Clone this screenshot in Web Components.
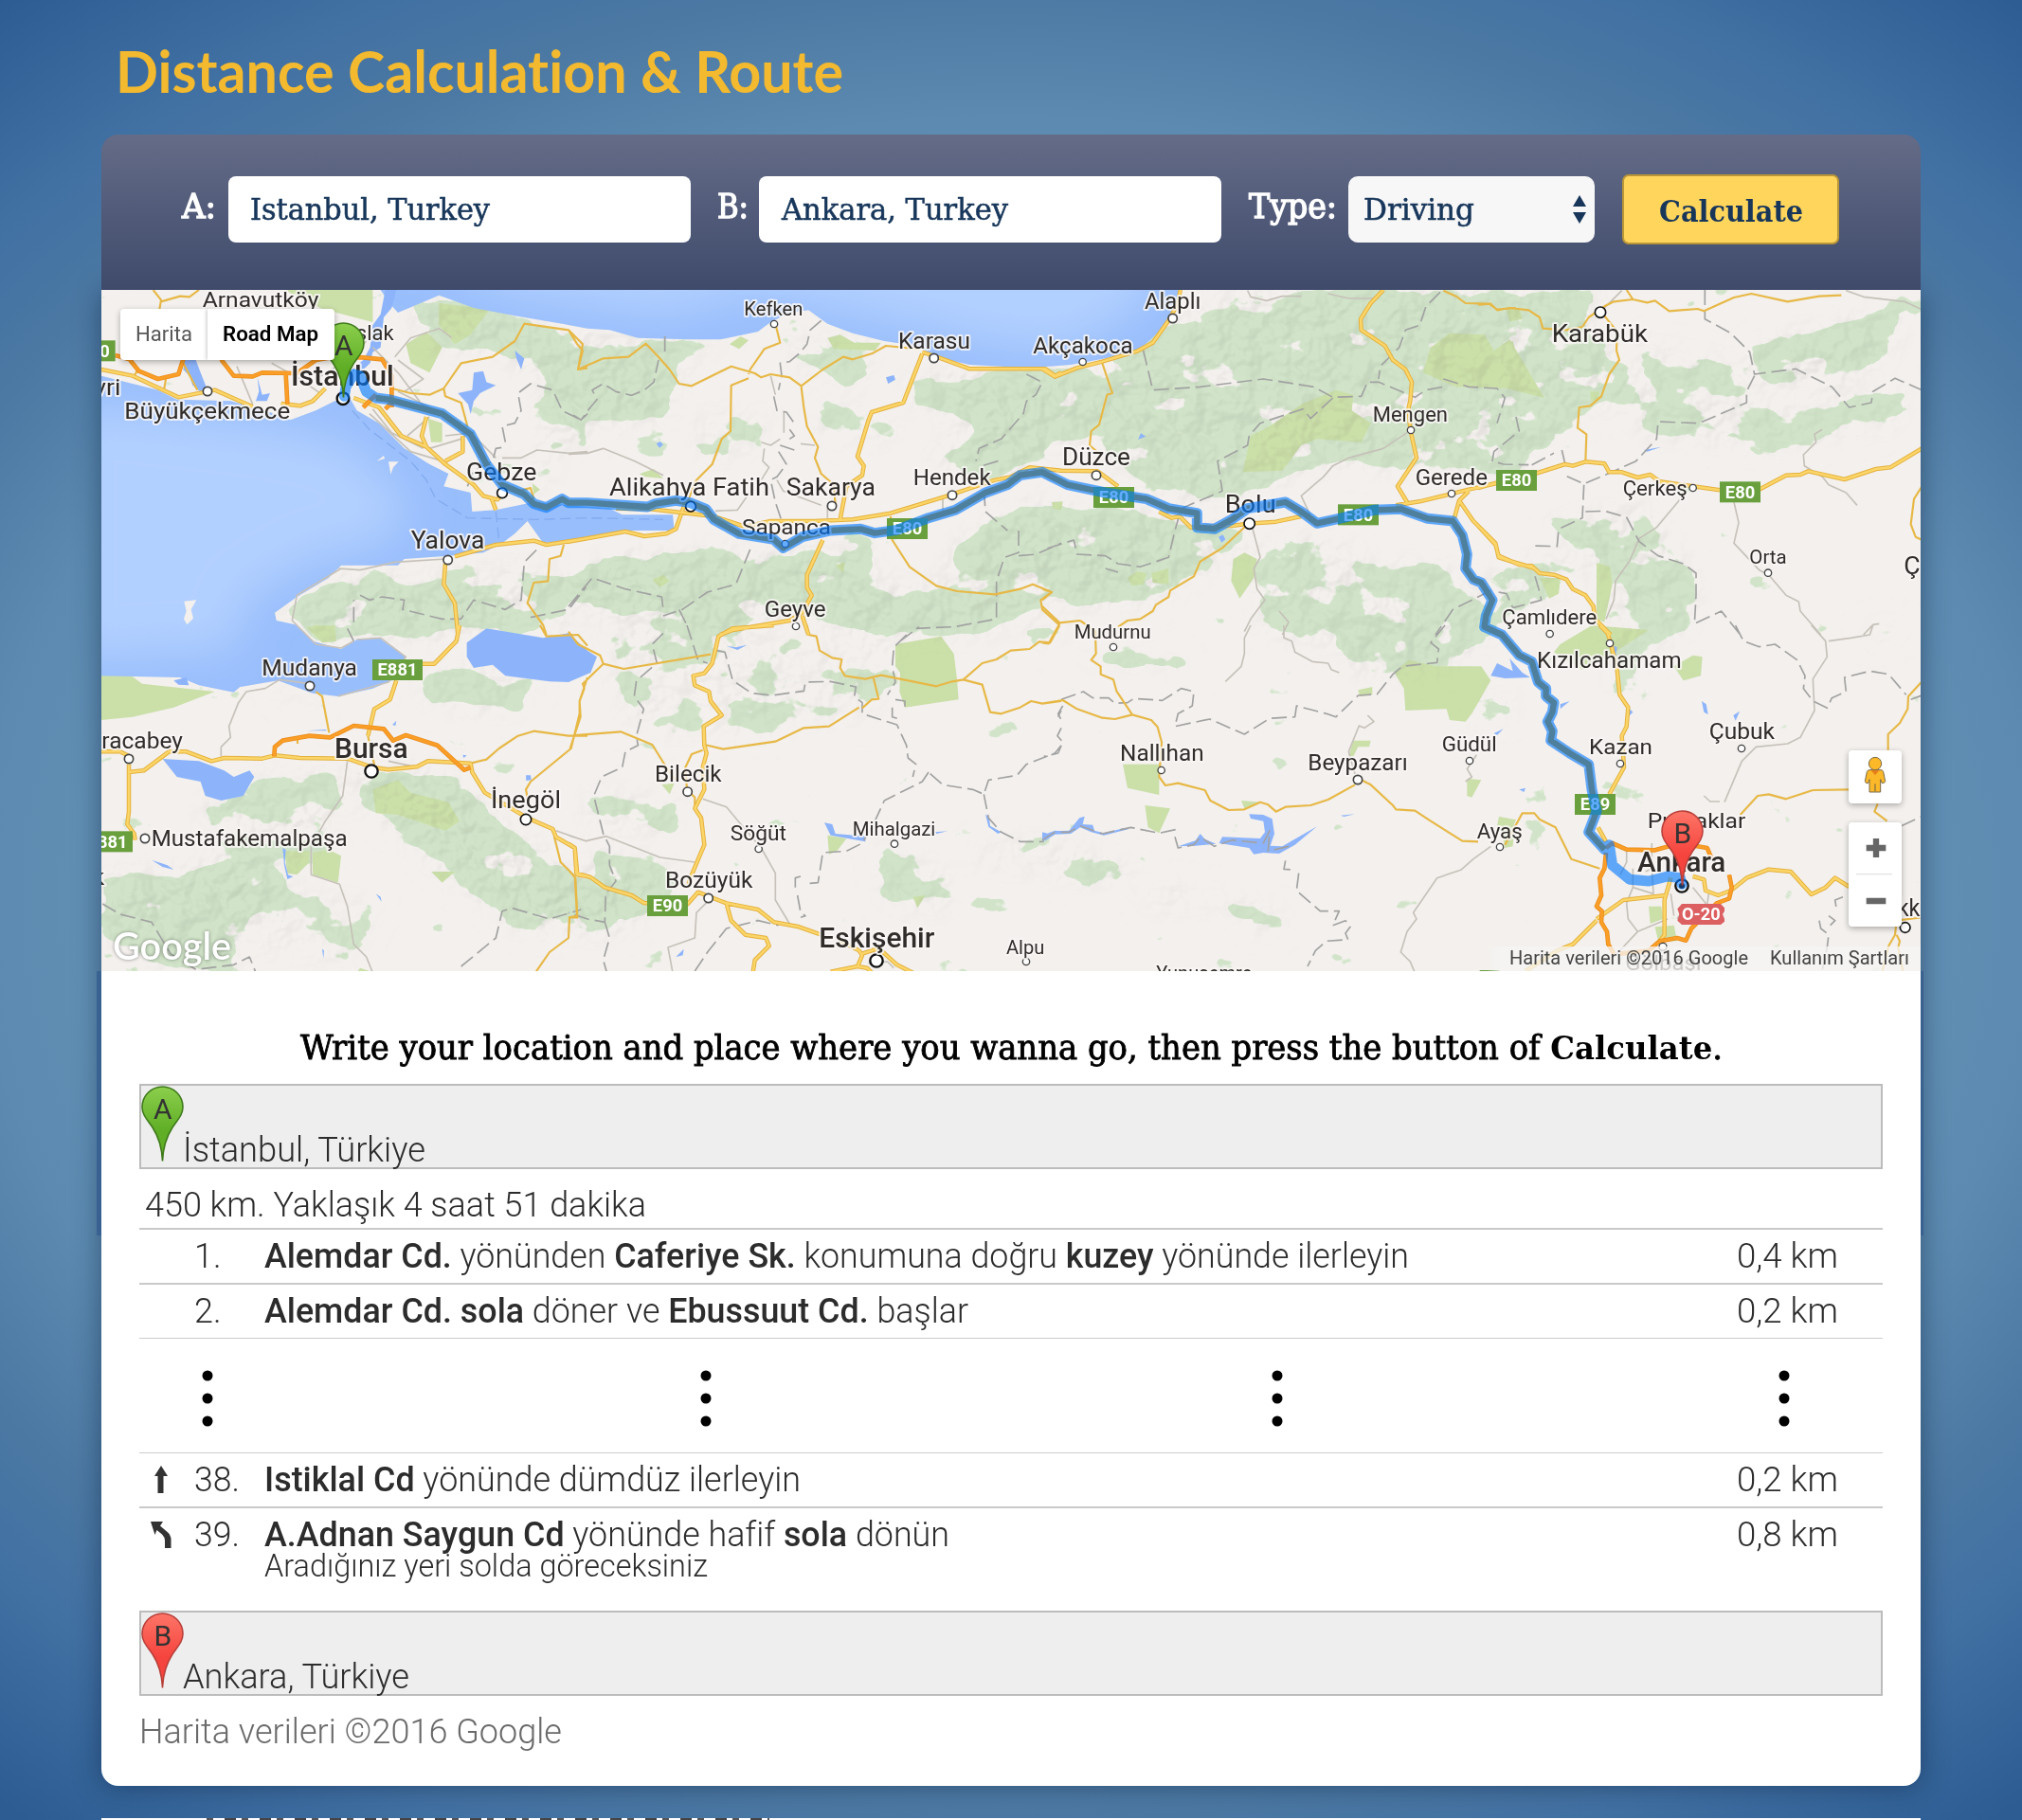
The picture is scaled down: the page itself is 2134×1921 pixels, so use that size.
<!DOCTYPE html>
<html lang="tr">
<head>
<meta charset="utf-8">
<title>Distance Calculation &amp; Route</title>
<style>
html,body{margin:0;height:1921px;overflow:hidden}
body{font-family:Roboto,"Liberation Sans",sans-serif;background:radial-gradient(ellipse 1650px 1250px at 1067px 950px,#628fb3 0,#608eb3 60%,#5c8ab0 66%,#4c79a3 77%,#4170a3 86%,#2c5c92 100%)}
</style>
</head>
<body>
<distance-app></distance-app>
<script>
const def=(name,html,after)=>customElements.define(name,class extends HTMLElement{
  connectedCallback(){
    if(this.shadowRoot)return;
    const t=document.createElement('template');
    t.innerHTML=typeof html==='function'?html(this):html;
    this.attachShadow({mode:'open'}).append(t.content.cloneNode(true));
    if(after)after(this);
  }
});

/* ---------- map data: [dx, dy] origin per tile, three units per pixel ---------- */
const tiles={
A:[0,0],B:[1500,0],C:[3000,0],D:[4380,0],E:[0,1080],F:[1500,1080],G:[3000,1080],H:[4380,1080]};
const roads={
A:{
o:'65,225 110,238 140,275 200,300 265,285 280,238;400,238 440,290 500,292 530,280 640,282 700,240 760,230 850,232 910,238 940,290 940,390;605,285 610,380;850,390 890,350;920,395 945,370',
y:'20,270 120,290 265,358 380,335 500,388;590,378 650,385 690,370 730,330;820,360 900,390 970,480 1050,515 1110,570 1200,635 1230,670 1275,682 1290,665;1255,675 1270,715;1050,420 1035,480 1050,515;1165,480 1165,530 1110,560;1140,862 1270,825 1390,812 1430,825 1560,805;1110,885 1105,950 1140,1010 1150,1110',
m:'185,18 210,50 205,80;210,55 270,38 300,40 330,18;940,330 1000,345 1060,350 1105,330 1160,250 1260,230 1330,180 1360,125 1500,145 1545,190 1530,270 1560,265;1105,330 1110,355 1160,375 1180,450;1485,825 1475,860 1440,870 1435,940 1390,945 1370,1010 1420,1080 1430,1110;280,250 325,335;1340,655 1380,645 1390,680;125,290 140,265;220,330 225,300',
g:'770,900 840,905 950,880 1110,870;780,900 640,985 625,1065 640,1080;950,230 1000,170 1090,140 1130,170;1290,550 1350,550 1400,525 1500,535 1560,530;450,260 500,380;880,200 960,280 1050,400;870,410 1000,530 1100,560;880,395 940,470 1040,520;1090,400 1200,480 1270,550;960,340 1160,440;700,300 800,240 860,180;720,350 650,300 560,250;1110,480 1200,470;1060,520 1160,490;980,340 1040,300 960,240;990,480 1060,420',
d:'1300,500 1290,450 1330,440 1350,400 1340,345 1380,315 1450,335 1480,400 1540,430 1560,410;1180,640 1200,590 1260,560 1270,520 1300,515;840,985 870,1000 910,990 980,1000 975,1030 1100,1060 1160,1060 1200,1000 1300,1030 1350,1000 1360,880 1410,830;820,1070 820,1000;1380,1055 1500,1030 1555,960'},
B:{
y:'0,815 180,783 240,798 310,790 340,775 370,690;150,710 260,712 460,735 560,768 640,750 780,750 900,745 1020,725 1200,670 1350,620 1400,610 1460,580 1560,590;860,745 880,640 930,605 935,575 915,545 950,430 960,405 1060,375 1120,220;1120,215 1180,235 1270,268 1510,268 1540,290 1560,280;805,810 755,920 755,960 770,985 740,1040 700,1065 520,1095 480,1110;740,1050 760,1110',
m:'0,145 28,190 45,210 30,270 110,235 190,230 245,188 285,230 320,270 350,315 390,322 515,260 590,282 610,295 640,285 700,295 737,322 805,270 870,230 900,238 960,220 1005,195 1110,205;570,285 575,270 620,205 670,185 655,125;570,298 515,320 513,465 485,490 455,570 405,620 380,680;737,325 745,390 755,450 790,515 780,550 800,600 840,635 845,700;1020,735 1025,810 1080,895 1165,955 1230,972 1350,982 1430,965 1470,950 1530,975 1495,1000 1500,1030 1555,1080',
g:'0,538 60,535 110,520 210,560 300,605;610,500 640,510 670,490;735,505 780,510;682,405 682,470;620,520 615,560 635,580 610,620;465,718 535,715 580,650;660,620 680,655 800,700;820,700 820,740;1185,670 1185,715;640,290 655,350',
d:'15,415 40,430 65,395 90,365 75,335 110,315 150,340 200,352 240,335 270,310 285,240;305,165 305,225;800,115 765,145 755,190 730,220 700,245 670,250 675,290 665,335;650,355 660,400 690,405 715,440;700,460 715,480 700,490;670,510 715,525;665,530 690,570 660,610 640,620 655,690 675,750;575,840 530,950 440,975 360,1030 300,1050;0,1020 75,930 180,965 295,990 300,1030;350,1030 380,1090;1450,285 1500,310 1480,350 1450,370 1440,410 1370,490 1300,520 1290,560;1360,560 1310,575 1320,720 1390,780;1425,780 1425,850 1380,865 1355,940 1355,1060 1220,1085 1100,1090;1425,860 1480,855 1560,820'},
C:{
y:'0,268 40,293 110,265 190,245 300,212 350,185 400,115 430,60 437,18;45,590 175,592 240,640;370,720 410,740 435,735 470,770 600,765 650,758 740,752 820,735;1080,18 1040,60 1008,110 1010,145 1085,195 1110,240 1150,270 1170,310 1165,370 1160,390 1165,460 1185,550 1125,640 1155,690;1120,700 1195,688 1290,665 1350,650 1440,630;1350,655 1320,685 1305,740;1320,685 1365,750 1435,820 1445,865 1510,885 1560,900',
m:'190,250 222,345 205,350 180,445 155,465 150,510 185,540;1270,20 1310,38 1340,60 1415,62 1440,80 1500,75;645,765 570,835 500,878 480,925 405,970 400,990 360,1015 350,1035 310,1060 270,1065 240,1085;0,965 30,975 0,1000;0,1020 55,1072 120,1065;55,1075 20,1138 0,1135;120,1065 170,1100',
g:'650,20 660,40 710,52 760,38 820,38;905,30 970,45 1060,45;1155,470 1080,520 970,550 920,575 890,610 820,670 850,735;665,770 690,865 670,900 680,965 705,1000 660,1060 640,1100;750,1035 780,1070 760,1110',
d:'320,210 350,335 500,325 700,300 860,325 920,358 1010,355 1030,310 1065,310 1180,358 1215,335 1270,325;920,360 850,425 825,395 690,440 655,480 650,510 555,560 570,655 440,710 420,780 400,865 310,895 240,885 200,860 110,855 100,810 10,838;1260,25 1215,70 1195,130 1150,145 1130,200 1070,260 1065,300;1270,300 1350,325 1440,330 1465,360 1440,440;1500,420 1510,465 1430,530 1425,560 1460,570 1540,572;200,900 240,912;1420,970 1300,1030 1245,1110'},
D:{
y:'0,645 60,628;180,600 275,570 300,575 340,562 400,568 415,595 455,595 505,612 545,603 575,625 680,640 765,652;890,650 975,605 1020,603 1045,592 1160,618 1260,585 1305,580 1405,520;0,765 55,825 65,860 130,888 170,892 195,915 240,920 280,935 300,965 340,985 365,1020 370,1060 420,1110',
m:'0,65 40,62 60,82 100,75 160,82 195,105 205,140 280,145 330,135 350,105 400,70 430,55 490,48 535,58 560,52 605,85 695,78 715,85 810,42 865,30 980,55 1080,38 1150,35;470,18 490,48;400,100 440,150 438,210 447,240 415,285 390,355 355,385 320,390 315,455 343,475 340,560;1405,640 1380,680 1370,760 1385,800 1405,810',
g:'390,85 455,20;1165,20 1220,40 1350,55 1405,80;1090,460 1065,475 1070,500 1030,540 1033,575 1090,610 1110,635 1165,660 1200,700;640,680 565,770 510,805 480,875 435,940 430,1000 405,1060;810,690 825,755 810,820 890,905 920,920 975,985 1015,1005 1020,1035 1085,1110;1220,1110 1250,1078 1270,1075',
d:'718,18 718,110 800,155 860,215 875,285 1005,268 1120,325 1175,390 1245,375 1250,340 1320,298 1405,335;875,290 850,340 850,375 700,440 640,438 570,435 565,490 500,560 400,605 335,632 280,608;335,635 330,740 255,775 250,830 170,828;340,720 400,718 470,738 510,815 570,860 650,885 690,915 690,985 685,1075 770,1035 830,1110;265,525 278,580;170,572 240,535;180,925 195,975 200,1000 110,1025 90,980 50,972'},
E:{
y:'1155,0 1145,50 1075,122 1035,122;955,175 935,235 885,265 865,350;20,400 80,400 120,420;108,465 155,460 235,400 290,400 370,430 410,420 530,422 570,412 650,420 800,422 880,450 930,457 1020,448 1055,430 1190,437 1195,465 1235,530 1370,610 1450,645 1460,670 1520,705 1528,790 1560,795;108,440 108,590 103,630 125,660 128,680',
m:'700,210 720,225 742,340;1190,437 1240,425 1280,390 1340,350 1390,335 1500,350 1560,350;1410,0 1430,35 1530,30 1560,65;1560,165 1535,240 1535,280 1508,390 1380,495 1365,520 1375,570;1455,670 1475,750 1520,795 1527,920 1503,925 1500,990 1440,1035 1395,1100;865,350 885,440;642,360 642,375',
o:'568,415 570,385 595,365 680,350 745,355 820,318 915,328 945,365 985,348 1085,380 1170,458 1190,450',
g:'640,0 700,60 780,72 820,50;585,172 540,200 480,210 455,245 425,320 430,355 400,385 400,415;585,172 680,185;830,45 905,40 985,100 930,180 770,225;800,430 785,540 730,620 685,700 685,790 775,820 800,890 820,1010 860,1050 880,1100;1460,650 1560,685;930,430 1000,445',
d:'25,882 80,915 180,940 240,1040 320,1090 440,1075 490,1050 510,1100;1160,1080 1270,990 1290,905 1320,895 1440,930 1540,900;800,10 820,50'},
F:{
y:'650,0 520,10 475,35 455,120 430,152 395,160 400,190 445,210 450,240 485,285 428,320 430,380 437,405 425,450 430,520 400,580 420,610 430,695 390,790 380,820;0,692 20,705 25,785 70,798 115,830 200,855 240,880 250,880;375,885 410,845 500,880 600,900 650,940 730,955 800,980;500,880 515,935 560,980 625,990 635,1015 590,1060 583,1105;860,1000 920,1030 930,1045 915,1080 830,1097;985,1025 1040,1075 1090,1100;930,1040 990,1020;915,1080 945,1085 960,1100',
m:'0,20 30,60 100,95 110,122 45,185 50,200 35,240 38,290 5,390;110,122 175,138 450,92;0,350 165,337 265,378 310,450 340,490;425,395 390,408 370,450 375,520 400,545 400,580;430,378 490,392 655,368 745,325 825,320 920,260;930,262 960,235 982,233 965,165;755,0 760,30 785,35 795,80 835,103 865,108 860,135 875,160 940,170 990,158 1165,193 1215,178 1250,172 1310,120 1355,108 1400,80 1460,75 1490,52 1525,55 1555,0;1250,172 1310,188 1335,275 1370,280 1430,260 1465,240 1500,248 1560,240;0,775 22,800 28,925 0,925',
g:'0,665 55,683 120,668 290,735 400,750;425,550 500,575 550,635 610,705 655,785 655,870 700,945;445,870 405,910 400,990 315,1020 330,1100;950,1070 1010,1065 1030,1085',
d:'300,25 265,60 280,120 215,175 208,225 238,265 215,350 220,380 180,400 170,450 105,480 80,540 110,660 130,700 130,760 150,810 118,850 115,940 60,930 0,910;115,940 130,990 110,1060 120,1095;375,0 410,110 440,120;470,80 495,85 520,175 580,215 645,222 745,208 750,180 830,178 910,195 905,225 930,245 930,280 1040,315 1070,380 1075,420 1100,440 1090,480;1070,30 1030,70 1025,130 1035,180 1010,220;1035,235 1065,240 1065,260;1025,260 1025,290 1040,295;1140,465 1120,495 1000,555 970,620 930,690 880,715 805,720 790,815 750,818;735,795 718,800 718,830;725,855 735,910 750,920 735,925;1145,470 1185,505 1280,520 1315,535 1330,490 1420,475 1450,440 1540,405 1560,380;1315,535 1330,610 1370,655 1430,685 1505,685;1560,270 1550,290;400,1095 440,1035 500,960 600,935 665,950;1050,50 1110,5'},
G:{
m:'168,20 170,90 155,110 185,130 185,155 225,172 235,208 285,283 345,300 365,322 378,370 370,480 390,507 430,500 515,522 532,555 590,585 640,583 690,560 715,568 740,590 770,575 850,570 905,552 990,505;0,248 65,237 110,265 190,293 230,297 285,283;1010,490 1040,505 1110,570 1120,583 1180,587 1230,620 1330,683 1380,685;1465,695 1520,595 1560,595',
g:'660,0 640,40 640,90 630,130 580,178;765,0 765,40 790,50 800,85 855,115 905,120 915,140 940,150;1030,285 1050,305 1020,325 1003,318 970,400 990,470;1420,700 1365,740 1325,775 1250,800 1175,910 1185,930 1155,970 1135,1035 1165,1065 1180,1100;1375,410 1345,455 1360,480 1340,495',
d:'60,235 130,210 160,230 210,230 230,247 270,245 290,232 380,238 440,200 480,210 475,255 430,280 420,320 530,297 560,310 640,345 720,295 800,290 805,255 900,280 930,290 1000,222 1060,218 1110,155 1140,130 1250,118 1255,75 1230,55 1275,0;65,255 50,280 60,300;60,325 48,350 65,370 50,405 5,415;0,680 40,655 85,655 120,635 190,660 280,640 370,658 430,645;420,670 430,705 480,695 500,670 545,700 600,680 700,690 720,650 715,715 780,700;770,745 765,772 800,775;812,785 805,840 880,905 940,905 920,950 960,935 975,955 960,975 968,995 900,1000 865,1030 840,1080'},
H:{
y:'385,0 410,25 418,50 440,140 448,220 475,260 470,320 455,350 462,450 415,535;380,640 405,685;610,800 590,870 590,980 575,1000;375,930 460,870 595,855;375,935 300,1010 250,1030 150,1095;680,795 715,805 720,840 760,855 800,840 850,800 920,773 990,780 1055,852 1100,830 1130,800 1175,828',
m:'110,650 140,595 178,595 195,615 245,640 295,740 385,770;1175,520 1060,522 975,550 920,535 885,540 830,600;1405,178 1362,225 1360,265 1335,310 1298,345 1298,395;1265,565 1255,590 1295,620;1405,925 1325,935 1320,980 1300,1015 1280,1095;1325,980 1335,1000 1330,1020 1345,1095',
o:'405,705 425,690 470,710 560,712 640,690 725,705 740,740;795,790 803,830 795,865 755,880 675,960 658,998 630,990 575,1000 540,1030 450,1040;405,720 400,770 385,800 390,855 375,890 392,905 390,940 408,970 412,1010 430,1040',
g:'1055,0 1100,50 1105,100 1060,170 1065,270 1020,355 980,375 880,385 835,430 780,560;1250,0 1240,30 1180,40 1110,50;470,880 475,930 505,970 430,1050;505,970 600,930;490,770 490,830 555,850 550,770;490,830 470,880;610,850 620,920;680,830 720,880 715,905;550,760 550,690;470,710 470,750 450,790;530,780 550,770;630,930 650,900;715,540 735,558 765,558;730,850 725,885',
d:'815,0 840,50 890,68 940,60 1010,110 1035,160 1030,200 1060,240 1105,262 1120,230 1165,210 1160,165 1240,145 1300,155 1355,220;1370,235 1405,222;1340,635 1405,605;1155,860 1130,870 1135,900;1110,920 1130,935 1115,950;1080,935 1085,960 1110,980 1105,1020 1090,1090'}
};
const parks={
A:'600,18 880,18 880,120 720,78;1090,60 1250,80 1190,160 1140,190 1090,130;985,190 1050,150 1100,200 1060,280 1000,250;1055,425 1100,440 1100,500 1065,500;1385,630 1410,650 1390,665;690,1080 740,1080 730,1105 700,1100',
B:'510,190 545,165 570,178 540,205;820,170 860,160 905,185 990,185 970,210 840,205;225,600 270,585 300,615 240,610;265,935 300,920 320,940 290,960;845,890 875,880 870,915',
C:'635,595 660,480 720,450 820,380 930,335 985,350 980,400 1040,440 1010,500 870,490 820,510 760,590;1205,280 1230,200 1290,155 1400,160 1430,210 1480,175 1590,360 1480,330 1310,325;605,870 640,850 680,870 670,930 625,995 598,940;270,930 300,910 330,915 320,950 285,955;345,915 400,900 400,950 350,945;30,690 65,688 60,715 35,712',
D:'80,190 110,180 130,260 210,360 90,330;90,80 130,75 140,110 100,118;375,882 418,895 425,950 400,1070 375,1060;195,930 260,930 255,980 225,995;355,340 385,340 380,368 358,370',
E:'20,158 110,155 150,185 380,210 250,260 120,290 20,300;880,520 960,490 1000,530 1120,560 1155,620 1110,650 960,600 890,595;690,720 740,710 780,730 770,815 690,790;600,715 680,715 680,750 640,790 610,785;1065,780 1140,780 1100,815;670,5 760,0 765,50 720,55;840,1085 880,1098 830,1098',
F:'1035,60 1180,35 1220,90 1230,170 1235,235 1065,260 1048,210 1050,150 1035,130;820,665 880,675 850,715 825,725;1090,860 1130,855 1105,895;295,505 335,500 320,535',
G:'1115,150 1160,110 1250,130 1390,130 1420,175 1360,280 1340,305 1290,300 1280,265 1150,270 1145,200;255,440 370,440 370,537 270,515;325,570 405,580 370,658 335,640;985,365 1040,365 1035,385 1000,385 985,415 970,415;1000,205 1045,195 1045,220 1005,225;1345,485 1390,490 1360,545 1345,540;630,555 690,560 640,580;1445,610 1500,615 1490,640 1440,635',
H:'260,60 360,0 540,15 440,80 330,140 240,85;620,130 680,95 710,100 705,160 650,175;0,170 40,175 0,245;65,605 115,615 110,700 85,705;540,890 580,890 585,930 545,945;560,955 620,950 630,1000 570,1000'};
const forest=[
[.85,'1000,60 1250,60 1420,130 1500,150 1480,330 1250,200 1050,200'],
[.85,'1480,140 1700,170 2000,175 1850,260 1820,420 1600,440 1480,420'],
[.68,'1420,300 1560,300 1560,520 1430,540'],
[.5,'1250,560 1450,560 1450,660 1300,640'],
[.5,'1900,420 2120,400 2120,520 1920,560'],
[.6,'2180,180 2480,180 2400,320 2200,240'],
[.55,'2250,380 2500,420 2540,500 2300,480'],
[.9,'2560,300 3000,260 3020,560 2820,620 2640,560 2800,450 2600,380'],
[.84,'3000,280 3190,260 3250,200 3400,140 3600,30 4000,20 4380,18 4750,20 4720,150 4850,260 4920,380 4750,380 4600,500 4500,600 4150,580 3900,560 3700,640 3600,690 3450,680 3270,600 3150,480 3000,520'],
[.9,'1720,850 2150,850 2450,850 2500,960 2700,960 2720,830 2950,700 3300,720 3650,800 3500,920 3350,1000 3150,1020 3050,1000 2800,1110 2450,1110 2250,1030 2000,1110 1700,1090 1500,1000 1400,960 1560,890'],
[.68,'3650,860 3900,780 4050,900 4250,880 4380,980 4450,1100 4300,1200 4050,1260 3900,1120 3700,1100'],
[.9,'600,1030 780,930 940,910 1000,960 1300,960 1350,1050 1200,1100 900,1120 700,1130'],
[.56,'1060,900 1500,900 1500,1100 1100,1100'],
[.85,'5250,200 5500,130 5720,60 5700,200 5530,320 5280,320'],
[.52,'4850,180 5250,260 5250,360 4950,360'],
[.64,'4850,360 5300,380 5400,460 5200,500 4900,480'],
[.54,'5240,430 5740,330 5700,450 5300,520'],
[.72,'4600,760 4900,700 5050,900 5080,1020 4930,1020 4700,850'],
[.6,'4380,930 4600,860 4720,900 4600,1000 4450,1060'],
[.62,'4850,960 5050,960 5050,1100 4900,1130'],
[.88,'20,1880 270,1860 550,1800 620,1900 500,2000 420,2170 250,2170 20,2060'],
[.68,'330,1640 560,1560 760,1540 780,1660 700,1820 400,1820'],
[.92,'800,1530 1150,1560 1300,1720 1500,1860 1560,1880 1500,2040 1200,1930 1000,1760 860,1640'],
[.65,'1250,1900 1700,1880 1650,2060 1300,2030'],
[.68,'1040,1220 1400,1250 1350,1350 1050,1330'],
[.58,'560,1250 760,1300 600,1320'],
[.9,'1580,1800 1820,1850 1840,1920 1700,2020 1560,2060'],
[.62,'1560,1600 1850,1640 1850,1740 1560,1720'],
[.44,'1600,1100 2100,1100 2200,1420 1700,1420'],
[.44,'2100,1130 2560,1130 2450,1380 2100,1380'],
[.58,'2480,1760 2720,1880 2700,1990 2500,1960'],
[.66,'3000,1760 3270,1830 3270,1900 3020,1870'],
[.52,'2780,1780 3000,1760 3000,1860 2800,1840'],
[.78,'3580,1940 3790,2010 3720,2050 3580,1990'],
[.54,'3320,1900 3540,1920 3540,1970 3330,1980'],
[.64,'3040,1210 3260,1170 3450,1190 3440,1220 3200,1200'],
[.6,'3700,1080 4260,1080 4260,1180 4050,1240 3900,1130'],
[.45,'2900,1080 3100,1080 3050,1150'],
[.5,'4380,1320 4520,1300 4480,1380'],
[.42,'4750,800 5000,1100 4800,1300'],
[.55,'5600,1080 5760,1080 5640,1150'],
[.44,'60,1840 900,1960 800,2150 500,2100']];
const polyUse=(s,dx,dy)=>s.split(';').map(p=>'M'+p.split(' ').map(q=>{const[a,b]=q.split(',');return(+a+dx)+','+(+b+dy)}).join('L')).join('');
const layer=k=>Object.keys(roads).map(t=>roads[t][k]?polyUse(roads[t][k],...tiles[t]):'').join('');
const parkPath=Object.keys(parks).map(t=>parks[t].split(';').map(p=>polyUse(p,...tiles[t])+'Z').join('')).join('');
const forestPaths=forest.map(([o,p])=>`<path fill-opacity="${o}" d="${polyUse(p,0,0)}Z"/>`).join('');

const road1='890,360 930,365 1100,410 1190,475 1240,570 1290,635 1360,665 1390,695 1430,707 1480,680 1500,692 1560,692 1750,705 1775,695 1840,685 1885,692 1935,712 1960,745 2040,790 2150,808 2180,835 2240,800 2330,780 2425,775 2470,788 2540,778 2640,740 2725,715 2820,660 2890,635 2930,605 3000,595 3080,635 3200,660 3330,680 3400,710 3490,725 3490,770 3545,775 3600,745 3650,710 3770,690 3820,720 3870,757 3950,740 4050,715 4135,712 4220,742 4300,750 4330,795 4345,855 4340,900 4365,935 4390,945 4425,1000 4405,1050 4400,1085 4455,1110 4510,1175 4550,1195 4570,1260 4595,1280 4595,1305 4620,1325 4615,1355 4600,1385 4615,1415 4610,1445 4670,1485 4730,1520 4740,1600 4755,1670 4730,1735 4780,1790';
const routeD='M790,355 795,325 820,285 840,290 860,340 '+road1+' 4795,1775 4805,1840 4860,1885 4920,1890 4980,1875 5020,1880 5025,1900';

const labels=[
['A','Arnavutköy',345,707,73,68],['A','Maslak',738,945,178,68],['A','İstanbul',625,945,320,86,500,786,362,19],['A','Büyükçekmece',98,617,425,72,400,357,339,14],['A','vri',2,80,352,72],['A','Gebze',1180,1397,622,76,400,1290,661,16],['A','Yalova',1005,1232,838,76,400,1118,873,14],
['B','Kefken',560,740,98,62,400,651,126,11],['B','Karasu',1048,1270,203,74,400,1157,234,14],['B','Alikahya Fatih',133,634,670,78,400,387,704,16],['B','Sakarya',693,970,668,76,400,834,702,14],['B','Sapanca',553,829,793,68,400,686,822,11],['B','Hendek',1095,1335,637,72,400,1215,668,14],['B','Geyve',624,813,1053,70,400,720,1083,11],
['C','Alaplı',328,500,77,74,400,413,108,14],['C','Akçakoca',-25,285,218,72,400,128,246,11],['C','Düzce',67,277,573,78,400,171,605,14],['C','Bolu',582,738,724,80,400,656,758,17],['C','Mengen',1050,1282,434,64,400,1167,462,11],['C','Gerede',1185,1408,635,70,400,1296,663,11],['C','Mudurnu',105,342,1121,62,400,225,1149,11],
['D','Karabük',237,535,184,80,400,387,89,17],['D','Çerkeş',462,660,668,66,400,680,645,11],['D','Orta',863,975,886,60,400,918,914,11],['D','Ç',1352,1398,917,76],['D','Çamlıdere',80,374,1078,66,400,227,1107,11],
['E','Mudanya',533,829,160,74,400,681,192,14],['E','racabey',26,277,390,72,400,108,423,14],['E','Bursa',763,990,420,88,500,876,462,20],['E','Mustafakemalpaşa',183,798,700,74,400,159,675,14],['E','İnegöl',1258,1474,580,80,400,1365,615,17],['E','k',-8,29,822,72],
['F','Bilecik',277,483,496,72,400,377,527,14],['F','Söğüt',516,688,680,66,400,602,708,11],['F','Bozüyük',310,581,832,74,400,443,864,14],['F','Mihalgazi',903,1160,667,62,400,1032,692,11],['F','Eskişehir',797,1157,1020,88,500,975,1062,20],['F','Alpu',1390,1505,1040,60,400,1449,1065,11],
['G','Nallıhan',250,510,430,72,400,377,459,11],['G','Beypazarı',845,1155,458,72,400,999,489,14],['G','Güdül',1269,1437,400,66,400,1353,429,11],['G','Ayaş',1380,1518,675,66,400,1449,702,11],['G','Yunusemre',365,662,1124,64],
['H','Kızılcahamam',190,642,136,70,400,417,57,11],['H','Kazan',355,550,408,66,400,450,438,11],['H','Çubuk',735,937,360,70,400,834,390,11],['H','Pursaklar',540,845,642,68],['H','Ankara',508,782,780,86,500,645,825,20],['H','Gölbaşı',470,705,1092,66,400,585,1018,12],['H','kk',1332,1397,920,76,400,1352,957,16]];
const badges=[['A',-65,178,130,'E80'],['B',1008,741,129,'E80'],['C',162,642,129,'E80'],['C',936,697,129,'E80'],['D',57,588,129,'E80'],['D',765,625,129,'E80'],['E',879,108,159,'E881'],['E',-38,652,158,'E881'],['F',249,855,129,'E90'],['H',306,534,129,'E89']];
const labelSvg=labels.map(([t,s,x0,x1,b,f,w=400,cx,cy,r])=>{const[dx,dy]=tiles[t];return(cx!==undefined?`<circle cx="${cx+dx}" cy="${cy+dy}" r="${r}" fill="#fff" stroke="${r>15?'#111':'#444'}" stroke-width="${r>18?7:r>12?5:4}"/>`:'')+`<text x="${x0+dx-4}" y="${b+dy}" font-size="${f}" font-weight="${w}" textLength="${x1-x0+6}" lengthAdjust="spacingAndGlyphs">${s}</text>`}).join('');
const badgeSvg=badges.map(([t,x,y,w,s])=>{const[dx,dy]=tiles[t];return`<rect x="${x+dx}" y="${y+dy}" width="${w}" height="66" fill="#699f3c"/><text class="b" x="${x+dx+w/2}" y="${y+dy+52}" text-anchor="middle">${s}</text>`}).join('');

def('map-canvas',`<style>
:host{display:block;width:1920px;height:719px}
svg{display:block}
text{font-family:Roboto,"Liberation Sans",sans-serif;fill:#2f2c29;stroke:#f8f6f4;stroke-opacity:.85;stroke-width:12px;stroke-linejoin:round;paint-order:stroke}
.b{fill:#fff;stroke:none;font-weight:700;font-size:55px}
.l path{fill:none;stroke-linejoin:round}
</style>
<svg width="1920" height="719" viewBox="21 18 5760 2157">
<defs>
<filter id="woods" filterUnits="userSpaceOnUse" x="0" y="0" width="5800" height="2200" color-interpolation-filters="sRGB">
 <feGaussianBlur in="SourceAlpha" stdDeviation="14" result="s"/>
 <feTurbulence type="fractalNoise" baseFrequency=".0065 .009" numOctaves="4" seed="11"/>
 <feColorMatrix values="0 0 0 0 0 0 0 0 0 0 0 0 0 0 0 1 0 0 0 0" result="n"/>
 <feComposite in="s" in2="n" operator="arithmetic" k2="1" k3="1.8" k4="-1.4"/>
 <feComponentTransfer result="cut"><feFuncA type="linear" slope="16"/></feComponentTransfer>
 <feFlood flood-color="#d1e4c9"/><feComposite in2="cut" operator="in"/>
</filter>
<filter id="relief" filterUnits="userSpaceOnUse" x="0" y="0" width="5800" height="2200" color-interpolation-filters="sRGB">
 <feGaussianBlur in="SourceAlpha" stdDeviation="40" result="s"/>
 <feTurbulence type="fractalNoise" baseFrequency=".012" numOctaves="3" seed="4"/>
 <feColorMatrix values="0 0 0 0 0 0 0 0 0 0 0 0 0 0 0 1 0 0 0 0"/>
 <feDiffuseLighting surfaceScale="60" diffuseConstant="1.13" lighting-color="#fff"><feDistantLight azimuth="225" elevation="62"/></feDiffuseLighting>
 <feComposite in2="s" operator="in"/>
</filter>
<filter id="soft" x="-30%" y="-30%" width="160%" height="160%"><feGaussianBlur stdDeviation="70"/></filter>
<clipPath id="sea"><path d="M20,290L200,335 260,365 430,370 540,400 620,430 700,400 760,370 810,365 830,400 900,440 980,520 1060,570 1120,600 1105,640 1190,660 1195,720 1270,715 1390,690 1500,700 1630,710 1670,730 1830,730 1835,780 1670,780 1500,810 1420,820 1370,750 1330,790 1290,820 1230,850 1120,860 980,870 960,890 780,890 740,930 640,990 570,1040 575,1065 635,1078 690,1130 780,1155 830,1125 900,1120 985,1180 940,1255 880,1280 770,1305 690,1295 580,1255 460,1275 440,1292 330,1270 270,1245 20,1240Z
M905,18L935,62 960,90 1090,35 1200,75 1330,100 1480,125 1560,140 1630,145 1720,170 1880,175 1980,175 2100,150 2140,120 2200,90 2260,82 2320,125 2400,155 2500,180 2600,195 2680,235 2770,255 2900,262 3000,262 3090,255 3200,235 3310,205 3370,150 3410,105 3430,60 3437,18Z"/></clipPath>
</defs>
<rect width="5800" height="2200" fill="#f3f0ed"/>
<g filter="url(#woods)">${forestPaths}</g>
<path d="${parkPath}" fill="#cbdfa9"/>
<g filter="url(#relief)" opacity=".075" style="mix-blend-mode:multiply">${forestPaths}</g>
<g clip-path="url(#sea)"><rect width="5800" height="2200" fill="#99befc"/>
<g fill="#b2d0ff" filter="url(#soft)"><path d="M-100,380L500,440 800,500 1000,700 920,820 700,870 480,1000 440,1160 -100,1190Z"/><path d="M1000,-120L3400,-120 3330,60 3080,210 2850,190 2500,110 2100,30 1800,100 1300,30Z"/></g></g>
<g fill="#f3f0ed"><path d="M283,1004L322,1000 305,1030 312,1058 292,1078 282,1060 290,1035ZM893,560L915,543 918,552ZM930,562L962,562 945,580 937,602Z"/></g>
<g fill="#8db4fb">
<path d="M920,18L955,18 940,75 915,105 905,200 880,215 872,250 845,275 800,320 805,280 850,240 872,200 880,130 905,95ZM1240,1090L1420,1120 1500,1105 1560,1160 1590,1180 1570,1230 1500,1260 1440,1258 1300,1240 1260,1205 1200,1215 1178,1180 1178,1135ZM215,1503L330,1510 410,1540 440,1560 490,1540 505,1560 470,1620 400,1635 350,1620 335,1575 260,1560ZM285,240L320,240 335,280 355,330 340,345 310,320 300,290 280,270ZM515,295L530,350 555,345 545,370 510,370 520,340ZM1200,280L1230,275 1240,310 1270,320 1220,345 1200,370 1190,412 1182,380 1150,345 1195,335ZM1330,210L1360,235 1350,270 1335,235ZM250,1255L290,1245 298,1270 265,1268ZM2505,295L2530,288 2535,302 2512,315ZM1778,505L1790,498 1800,508 1788,518ZM3303,492L3312,472 3328,482ZM3558,800L3572,793 3580,808 3568,818ZM595,1785L605,1790 602,1830 612,1870 628,1876 610,1884 600,1840ZM180,1823L230,1840 250,1854 215,1845ZM890,1930L905,1940 908,1955ZM1365,1555L1380,1555 1382,1570 1366,1572ZM720,2105L726,2110 724,2135ZM942,1395L955,1382 952,1398ZM1165,1490L1178,1492 1168,1500ZM670,1414L730,1410 735,1414ZM1840,2130L1865,2105 1862,2125ZM2000,1145L2030,1150 2065,1142 2035,1158Z"/>
<path d="M3655,1678L3700,1680 3728,1693 3735,1740 3722,1778 3760,1780 3870,1717 3800,1775 3750,1803 3700,1800 3670,1805 3655,1785 3560,1770 3570,1750 3620,1752 3690,1755 3705,1735 3700,1700 3660,1692ZM3000,1755L3040,1732 3085,1730 3118,1690 3134,1685 3128,1710 3160,1712 3165,1730 3195,1738 3260,1722 3275,1725 3195,1745 3155,1735 3120,1720 3090,1740 3040,1742 3010,1762ZM3430,1780L3485,1762 3500,1740 3515,1757 3550,1772 3485,1778ZM3945,1682L3990,1678 3955,1686ZM3000,1732L3000,1735 3020,1740 3005,1765 3000,1760ZM4440,1200L4490,1225 4480,1185 4520,1230 4545,1245 4465,1248 4420,1240ZM5088,1320L5102,1330 5108,1362 5095,1355ZM5188,1365L5208,1352 5195,1382ZM4810,1145L4820,1150 4815,1178ZM4640,1330L4670,1320 4640,1345ZM4510,1600L4530,1595 4525,1608ZM4430,1422L4460,1408 4440,1428ZM4905,525L4960,515 4915,530ZM4860,1345L4870,1355 4860,1365ZM2310,1705L2335,1710 2345,1740 2440,1748 2440,1765 2330,1745ZM2820,1678L2832,1690 2835,1715 2870,1735 2860,1740 2830,1718ZM3000,1745L3040,1730 3060,1732 3020,1748ZM2660,1735L2700,1732 2665,1740Z"/>
</g>
<g class="l">
<path d="M815,400L870,460 1000,560 1050,620 1080,680 1180,740 1400,745 1560,740 1800,745M1270,720L1280,810" stroke="#83abef" stroke-width="4" stroke-dasharray="34 16"/>
<path d="${layer('g')}" stroke="#c6c1b9" stroke-width="5"/>
<path d="${layer('d')}" stroke="#a2a2a2" stroke-width="5" stroke-dasharray="48 18"/>
<path d="${layer('m')}" stroke="#e7b846" stroke-width="6.5"/>
<path d="${layer('y')}" stroke="#e4b13f" stroke-width="13.5"/>
<path d="${layer('y')}" stroke="#fbd567" stroke-width="7.5"/>
<path d="${layer('o')}" stroke="#ea8d1c" stroke-width="14"/>
<path d="${layer('o')}" stroke="#fb9e27" stroke-width="9"/>
<path d="M${road1}" stroke="#c88c00" stroke-width="19"/>
</g>
${labelSvg}${badgeSvg}
<path d="M5025,1962H5148L5160,1975V1985L5154,1995L5160,2010V2018L5148,2028H5025L5011,2015L5017,1995L5011,1978Z" fill="#dc5f62"/>
<text class="b" x="5025" y="2014" textLength="122" lengthAdjust="spacingAndGlyphs">O-20</text>
<rect x="4385" y="2172" width="63" height="10" fill="#699f3c"/>
<g class="l"><path d="${routeD}" stroke="#0078ff" stroke-opacity=".61" stroke-width="33" stroke-linecap="round"/></g>
<circle cx="5025" cy="1905" r="9" fill="#103b6c"/>
</svg>`);

def('map-pin',h=>{const red=h.getAttribute('tone')==='red',a=red?'#fd7567':'#8ccf4d',b=red?'#f5433d':'#5fae25',c=red?'#b8403a':'#3f7a1c';
return `<style>:host{display:block;width:45px;height:81px;flex:none}svg{display:block}text{font:30px Roboto,sans-serif;fill:#333}</style>
<svg width="45" height="81" viewBox="0 0 45 81"><defs><linearGradient id="g" x1="0" y1="0" x2="0" y2="1"><stop offset="0" stop-color="${a}"/><stop offset=".6" stop-color="${b}"/></linearGradient></defs>
<path d="M22.5 79.5C22 67 18.500 54 12 44C7 36.500 1 31 1 22.500A21.500 21.500 0 0 1 44 22.500C44 31 38 36.500 33 44C26.500 54 23 67 22.500 79.500Z" fill="url(#g)" stroke="${c}" stroke-width="1.6"/>
<text x="22.800" y="35" text-anchor="middle">${h.getAttribute('letter')}</text></svg>`});

def('map-types',`<style>:host{display:flex;height:54px;border-radius:4px;background:#fff;box-shadow:0 2px 6px rgba(0,0,0,.3);font-size:21.5px;overflow:hidden;line-height:53px}
span{box-sizing:border-box;color:#565656;width:92px;padding-left:16px}b{color:#000;font-weight:600;width:134px;box-sizing:border-box;padding-left:16px;box-shadow:-1px 0 4px rgba(0,0,0,.22)}</style><span><fit-text w="60">Harita</fit-text></span><b><fit-text w="101">Road Map</fit-text></b>`);

def('map-tools',`<style>:host{display:flex;flex-direction:column;gap:20px;width:56px}
div{background:#fff;border-radius:4px;box-shadow:0 2px 6px rgba(0,0,0,.3)}svg{display:block}</style>
<div><svg width="56" height="56" viewBox="0 0 168 168"><g fill="#fbb829" stroke="#7a6a4a" stroke-width="3" stroke-linejoin="round"><path d="M66 62Q60 62 58 68L52 98Q54 106 62 104L66 92V132H101V92L106 104Q114 104 116 98L110 68Q108 62 102 62Z"/><circle cx="84" cy="42" r="20"/></g><path d="M71 63H97L84 79Z" fill="#e57f1a"/><path d="M84 106V130" stroke="#8a7440" stroke-width="4"/></svg></div>
<div><svg width="56" height="110" viewBox="0 0 168 330"><path d="M56 81H118M87 51V111M56 249H118" stroke="#666" stroke-width="19"/><path d="M24 164H138" stroke="#e2e2e2" stroke-width="4"/></svg></div>`);

def('route-map',`<style>:host{display:block;position:relative;height:719px;overflow:hidden}
map-types,map-tools,map-pin,.logo,.terms{position:absolute}
map-types{left:20px;top:20px}map-tools{left:1844px;top:486px}
.pa{left:233px;top:34px}.pb{left:1645.5px;top:549px}
.logo{left:12px;top:670px;font:600 40px/44px Lato,sans-serif;color:#fff;text-shadow:0 0 4px rgba(0,0,0,.45)}
.terms{right:0;bottom:0;height:26px;display:flex;font-size:19.500px;line-height:25px;color:#444;background:linear-gradient(90deg,transparent,rgba(246,245,244,.78) 14px);padding:0 12px 0 24px;gap:23px}</style>
<map-canvas></map-canvas>
<map-pin class="pa" letter="A"></map-pin><map-pin class="pb" letter="B" tone="red"></map-pin>
<map-types></map-types><map-tools></map-tools>
<div class="logo"><fit-text w="125">Google</fit-text></div>
<div class="terms"><fit-text w="252">Harita verileri ©2016 Google</fit-text><fit-text w="147">Kullanım Şartları</fit-text></div>`);

def('text-field',`<style>:host{display:block;box-sizing:border-box;height:70px;border-radius:8px;background:#fff;color:#17365a;font-size:31px;line-height:70px;padding-left:23px;-webkit-text-stroke:.5px #17365a}</style><slot></slot>`);
def('type-select',`<style>:host{display:flex;box-sizing:border-box;width:260px;height:70px;border-radius:10px;background:#f7f7f7;color:#17365a;font-size:31px;line-height:70px;padding:0 9px 0 16px;justify-content:space-between;align-items:center;-webkit-text-stroke:.5px #17365a}svg{display:block}</style><slot></slot><svg width="14" height="30" viewBox="0 0 14 30" fill="#17365a"><path d="M7 0L14 12H0ZM7 30L0 18H14Z"/></svg>`);
def('calc-button',`<style>:host{display:block;box-sizing:border-box;width:229px;height:74px;margin-top:-2px;border:2px solid #b99638;border-radius:7px;background:#ffd55c;color:#17365a;font-weight:700;font-size:31px;line-height:74px;text-align:center}</style><slot></slot>`);

def('search-bar',`<style>:host{display:flex;box-sizing:border-box;height:164px;padding:44px 0 0 85px;background:linear-gradient(#646c87,#3f4a6b);font-family:"DejaVu Serif Condensed","DejaVu Serif",serif;align-items:flex-start}
label{color:#fff;font-size:35px;line-height:64px;font-weight:400;-webkit-text-stroke:1.3px #fff}</style>
<label style="width:49px"><fit-text w="36">A:</fit-text></label><text-field style="width:488px"><fit-text w="253">Istanbul, Turkey</fit-text></text-field>
<label style="margin-left:28px;width:44px"><fit-text w="33">B:</fit-text></label><text-field style="width:488px;padding-left:24px"><fit-text w="239">Ankara, Turkey</fit-text></text-field>
<label style="margin-left:29px;width:105px"><fit-text w="93">Type:</fit-text></label><type-select><fit-text w="117">Driving</fit-text></type-select>
<calc-button style="margin-left:29px"><fit-text w="152">Calculate</fit-text></calc-button>`);

def('place-box',`<style>:host{display:flex;box-sizing:border-box;height:90px;border:2px solid #bcbcbc;background:#eee;align-items:flex-end}
map-pin{align-self:flex-start;margin-left:-.5px}div{line-height:36px;margin-left:-.5px}</style><map-pin></map-pin><div><slot></slot></div>`,
h=>{const p=h.shadowRoot.querySelector('map-pin'),n=document.createElement('map-pin');n.setAttribute('letter',h.getAttribute('letter'));n.setAttribute('tone',h.getAttribute('tone')||'');p.replaceWith(n)});

def('route-step',`<style>:host{display:flex;box-sizing:border-box;border-top:2px solid #c9c9c9;height:58px;padding-top:4px;line-height:48px}
.i{width:58px;display:flex;align-items:center;height:48px}.n{width:74px}.t{flex:1;display:flex;flex-direction:column;align-items:flex-start}.k{width:154px}
::slotted([slot=sub]){font-size:33px;line-height:18px}</style>
<div class="i"><slot name="icon"></slot></div><div class="n"><slot name="num"></slot></div><div class="t"><slot></slot><slot name="sub"></slot></div><div class="k"><slot name="km"></slot></div>`);

def('more-steps',`<style>:host{display:flex;box-sizing:border-box;height:122px;border-top:1px solid #ccc;border-bottom:1px solid #ccc;padding:33px 0 0 66px}
svg{display:block}</style>${[0,514,591,523].map(m=>`<svg style="margin-left:${m}px" width="12" height="60" viewBox="0 0 12 60"><circle cx="6" cy="6" r="5.500"/><circle cx="6" cy="30" r="5.500"/><circle cx="6" cy="54" r="5.500"/></svg>`).join('')}`);

def('route-panel',`<style>:host{display:block;box-sizing:border-box;height:860px;padding:60px 40px 0;background:#fff;color:#2c2c2c;font-size:36px;font-weight:300}
b{font-weight:500}.help{height:59px;text-align:center;color:#000;font:400 34.500px/42px "DejaVu Serif Condensed","DejaVu Serif",serif;-webkit-text-stroke:.8px #000}.help b{font-weight:700;font-size:.955em;-webkit-text-stroke:0}
.sum{height:62px;box-sizing:border-box;padding:14px 0 0 6px;line-height:49px}
.copy{padding-top:14px;line-height:48px;color:#6a6a6a}
svg{display:block;margin-left:12px}</style>
<div class="help"><fit-text w="1501">Write your location and place where you wanna go, then press the button of <b>Calculate</b>.</fit-text></div>
<place-box letter="A"><fit-text w="256">İstanbul, Türkiye</fit-text></place-box>
<div class="sum"><fit-text w="529">450 km. Yaklaşık 4 saat 51 dakika</fit-text></div>
<route-step><span slot="num">1.</span><fit-text w="1208"><b>Alemdar Cd.</b> yönünden <b>Caferiye Sk.</b> konumuna doğru <b>kuzey</b> yönünde ilerleyin</fit-text><fit-text slot="km" w="107">0,4 km</fit-text></route-step>
<route-step><span slot="num">2.</span><fit-text w="743"><b>Alemdar Cd. sola</b> döner ve <b>Ebussuut Cd.</b> başlar</fit-text><fit-text slot="km" w="107">0,2 km</fit-text></route-step>
<more-steps></more-steps>
<route-step style="border:0;height:56px"><svg slot="icon" width="22" height="30" viewBox="0 0 22 30"><path d="M11 0L18 11H13.500V29H7.500V11H4Z" fill="#333"/></svg><fit-text slot="num" w="48">38.</fit-text><fit-text w="566"><b>Istiklal Cd</b> yönünde dümdüz ilerleyin</fit-text><fit-text slot="km" w="107">0,2 km</fit-text></route-step>
<route-step style="height:110px"><svg slot="icon" width="22" height="28" viewBox="0 0 22 28"><path d="M0 0H13L10 4.500L17 10.500Q21.500 14 21.500 19V28H15V20Q15 16.500 12 13.500L6.500 9L4.500 14Z" fill="#333"/></svg><fit-text slot="num" w="48">39.</fit-text><fit-text w="723"><b>A.Adnan Saygun Cd</b> yönünde hafif <b>sola</b> dönün</fit-text><fit-text slot="sub" w="468">Aradığınız yeri solda göreceksiniz</fit-text><fit-text slot="km" w="107">0,8 km</fit-text></route-step>
<place-box letter="B" tone="red"><fit-text w="239">Ankara, Türkiye</fit-text></place-box>
<div class="copy"><fit-text w="446">Harita verileri ©2016 Google</fit-text></div>`);

def('distance-app',`<style>:host{display:flex;flex-direction:column;height:1921px;padding:0 107px;box-sizing:border-box}
h1{margin:0;height:142px;box-sizing:border-box;padding:38px 0 0 15px;font:700 62px/72px Lato,sans-serif;color:#f3b92f;font-variant-ligatures:none}
main{flex:none;position:relative;width:1920px;height:1743px;border-radius:18px}
main::before{content:"";position:absolute;inset:164px 0 0;border-radius:18px;box-shadow:0 0 28px rgba(10,30,60,.5)}
main::after{content:"";position:absolute;left:-5px;right:-3px;top:883px;height:279px;background:#345e90;opacity:.8}
.in{position:relative;z-index:1;border-radius:18px;overflow:hidden}
footer{margin-top:34px;height:2px;flex:none;background:linear-gradient(90deg,#fff 105px,transparent 105px 705px,#fff 705px),repeating-linear-gradient(90deg,#555 0 7px,#fff 7px 19px,#444 19px 31px,#fff 31px 37px)}</style>
<h1><fit-text w="768">Distance Calculation &amp; Route</fit-text></h1>
<main><div class="in"><search-bar></search-bar><route-map></route-map><route-panel></route-panel></div></main>
<footer></footer>`);

/* Horizontally scales one line of text to the given width. */
def('fit-text',`<style>:host{display:inline-block;vertical-align:top;text-align:left}span{display:inline-block;white-space:nowrap;transform-origin:0 50%}</style><span><slot></slot></span>`,
h=>{const s=h.shadowRoot.querySelector('span'),w=+h.getAttribute('w');s.style.transform='none';const n=s.getBoundingClientRect().width;h.style.width=w+'px';s.style.transform='scaleX('+w/n+')'});
</script>
</body>
</html>
